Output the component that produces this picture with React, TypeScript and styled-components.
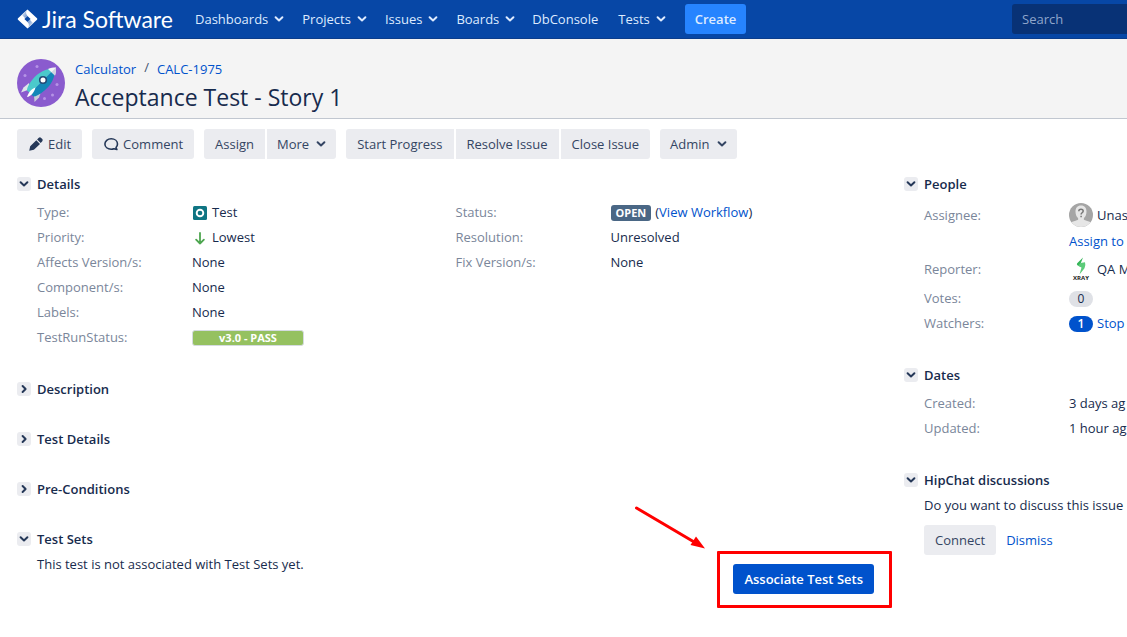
import React from "react";
import styled, { createGlobalStyle, css } from "styled-components";

const GlobalStyle = createGlobalStyle`
  * { box-sizing: border-box; }
  body {
    margin: 0;
    background: #fff;
    color: #172b4d;
    font-family: "Open Sans", "Noto Sans", sans-serif;
    font-size: 13px;
    line-height: 20px;
    overflow-x: hidden;
  }
  button, input { font: inherit; }
  a { color: #0052cc; text-decoration: none; }
`;

const NavBar = styled.header`
  display: flex;
  align-items: center;
  height: 39px;
  padding-left: 17px;
  background: #0747a6;
  border-bottom: 1px solid #0b3d8c;
`;

const Logo = styled.a`
  display: flex;
  align-items: center;
  gap: 4px;
  width: 169px;
  color: #fff;
  font-family: Lato, sans-serif;
  font-size: 23px;
  white-space: nowrap;
`;

const Nav = styled.nav`
  display: flex;
  align-items: center;
`;

const NavButton = styled.button`
  display: flex;
  align-items: center;
  gap: 6px;
  height: 30px;
  padding: 0 9px;
  border: 0;
  background: none;
  color: #deebff;
`;

const NavLink = styled.a`
  padding: 0 11px 0 8px;
  color: #deebff;
`;

const CreateButton = styled.button`
  height: 30px;
  margin-left: 10px;
  padding: 0 10px;
  border: 0;
  border-radius: 3px;
  background: #2684ff;
  color: #deebff;
  font-weight: 600;
`;

const SearchInput = styled.input`
  width: 115px;
  height: 30px;
  margin-left: auto;
  padding: 0 10px;
  border: 0;
  border-radius: 3px 0 0 3px;
  background: #083276;
  color: #deebff;
  &::placeholder { color: #8fa6cb; opacity: 1; }
`;

const IssueHeader = styled.div`
  display: flex;
  gap: 10px;
  height: 80px;
  padding: 20px 17px 0;
  background: #f4f4f4;
  border-bottom: 1px solid #c1c7d0;
`;

const Crumbs = styled.nav`
  display: flex;
  gap: 8px;
`;

const Slash = styled.span`
  color: #42526e;
  line-height: 16px;
`;

const Title = styled.h1`
  margin: 0;
  font-size: 23px;
  font-weight: 500;
  line-height: 36px;
`;

const Toolbar = styled.div`
  display: flex;
  gap: 10px;
  padding: 10px 17px 0;
`;

const ButtonGroup = styled.div`
  display: flex;
  gap: 2px;
`;

const ToolButton = styled.button<{ $menu?: boolean }>`
  display: flex;
  align-items: center;
  gap: ${(p) => (p.$menu ? 7 : 4)}px;
  height: 30px;
  padding: 0 ${(p) => (p.$menu ? 10 : 11)}px;
  border: 0;
  background: #ebecf0;
  color: #344563;
  white-space: nowrap;
  &:first-child { border-top-left-radius: 3px; border-bottom-left-radius: 3px; }
  &:last-child { border-top-right-radius: 3px; border-bottom-right-radius: 3px; }
`;

const Columns = styled.div`
  display: grid;
  grid-template-columns: minmax(0, 1fr) 223px;
  gap: 30px;
  padding: 15px 0 20px 17px;
`;

const Stack = styled.div`
  display: flex;
  flex-direction: column;
  gap: 30px;
  min-width: 0;
`;

const ModuleHead = styled.div`
  display: flex;
  align-items: center;
  gap: 6px;
`;

const Toggle = styled.button`
  display: flex;
  align-items: center;
  justify-content: center;
  width: 14px;
  height: 14px;
  padding: 0;
  border: 0;
  border-radius: 3px;
  background: #ebecf0;
  color: #253858;
`;

const ModuleTitle = styled.h2`
  margin: 0;
  font-size: 13px;
  font-weight: 600;
  line-height: 20px;
  white-space: nowrap;
`;

const ModuleBody = styled.div`
  padding: 5px 0 0 20px;
`;

const DetailColumns = styled.div`
  display: grid;
  grid-template-columns: 1fr 1fr;
`;

const List = styled.dl`
  margin: 0;
`;

const Row = styled.div<{ $label: number; $tall?: boolean }>`
  display: grid;
  grid-template-columns: ${(p) => p.$label}px minmax(0, 1fr);
  height: ${(p) => (p.$tall ? 32 : 25)}px;
  line-height: ${(p) => (p.$tall ? 32 : 27)}px;
  white-space: nowrap;
`;

const Term = styled.dt`
  color: #7a869a;
`;

const Value = styled.dd<{ $tall?: boolean }>`
  display: flex;
  align-items: center;
  gap: 4px;
  height: ${(p) => (p.$tall ? 32 : 27)}px;
  margin: 0;
  > * { flex-shrink: 0; }
`;

const AssignLine = styled.div`
  padding: 0 0 2px 145px;
  line-height: 20px;
  white-space: nowrap;
`;

const Lozenge = styled.span`
  height: 16px;
  padding: 0 5px;
  border-radius: 3px;
  background: #4a6785;
  color: #fff;
  font-size: 11px;
  font-weight: 700;
  line-height: 16px;
`;

const RunStatus = styled.span`
  width: 112px;
  height: 16px;
  border: 1px solid #d5dbe0;
  border-radius: 3px;
  background: #95c160;
  color: #fff;
  font-size: 11px;
  font-weight: 700;
  line-height: 14px;
  text-align: center;
`;

const Badge = styled.span<{ $active?: boolean }>`
  width: 24px;
  height: 16px;
  border-radius: 8px;
  background: #dfe1e6;
  color: #172b4d;
  font-size: 12px;
  line-height: 16px;
  text-align: center;
  ${(p) =>
    p.$active &&
    css`
      background: #0052cc;
      color: #fff;
      font-weight: 600;
    `}
`;

const TestSetsRow = styled.div`
  display: flex;
  justify-content: space-between;
  align-items: flex-start;
`;

const Text = styled.p`
  margin: 0;
  white-space: nowrap;
`;

const Callout = styled.div`
  position: relative;
  margin-top: 10px;
  &::after {
    content: "";
    position: absolute;
    inset: -13px -18px -14px -16px;
    border: 3px solid #f00;
    border-radius: 1px;
    pointer-events: none;
  }
`;

const CalloutArrow = styled.svg`
  position: absolute;
  left: -100px;
  top: -60px;
  pointer-events: none;
`;

const PrimaryButton = styled.button`
  height: 30px;
  padding: 0 11px;
  border: 0;
  border-radius: 3px;
  background: #0052cc;
  color: #fff;
  font-weight: 600;
`;

const Actions = styled.div`
  display: flex;
  align-items: center;
  gap: 10px;
  padding-top: 10px;
`;

const ChevronDown = () => (
  <svg width="10" height="8" viewBox="0 0 10 8" fill="none" stroke="currentColor" strokeWidth="2" strokeLinecap="round" strokeLinejoin="round" aria-hidden="true">
    <path d="M1.6 2.3 5 5.5 8.4 2.3" />
  </svg>
);

const ChevronRight = () => (
  <svg width="8" height="10" viewBox="0 0 8 10" fill="none" stroke="currentColor" strokeWidth="2" strokeLinecap="round" strokeLinejoin="round" aria-hidden="true">
    <path d="M2.6 2 5.6 5 2.6 8" />
  </svg>
);

const JiraMark = () => (
  <svg width="21" height="20" viewBox="0 0 21 20" aria-hidden="true">
    <defs>
      <linearGradient id="fadeUp" x1="0" y1="0" x2="1" y2="1">
        <stop offset="0" stopColor="#fff" />
        <stop offset="1" stopColor="#5b86c6" />
      </linearGradient>
      <linearGradient id="fadeDown" x1="1" y1="1" x2="0" y2="0">
        <stop offset="0" stopColor="#fff" />
        <stop offset="1" stopColor="#5b86c6" />
      </linearGradient>
    </defs>
    <path fill="#fff" fillRule="evenodd" d="M10.5.4 20 9.3q.7.7 0 1.4L10.5 19.6 1 10.7q-.7-.7 0-1.4ZM10.5 6.9 7.4 10l3.1 3.1 3.1-3.1Z" />
    <path fill="url(#fadeUp)" d="M10.5 6.9C8.6 5 8.6 2.4 10.4.5L4.800 5.700 8.200 9.200Z" />
    <path fill="url(#fadeDown)" d="M10.5 13.1c1.9 1.9 1.9 4.5.1 6.4l5.600-5.200-3.400-3.500Z" />
  </svg>
);

const RocketAvatar = () => (
  <svg width="48" height="48" viewBox="0 0 48 48" role="img" aria-label="Calculator">
    <circle cx="24" cy="24" r="24" fill="#8a5bce" />
    <g fill="#b593e6">
      <circle cx="20" cy="7.5" r="1.5" />
      <circle cx="8" cy="16.5" r="1.5" />
      <circle cx="40" cy="25.5" r="1.5" />
      <circle cx="35.5" cy="36" r="1.5" />
      <circle cx="27.5" cy="39.5" r="1.5" />
    </g>
    <path fill="#dfe3ea" d="M12 24 6.5 28.5 4 33.5l8-3Z" />
    <path fill="#c9ced9" d="M23.5 34.5 22 38.5 17.5 43 17 36Z" />
    <path fill="#4bc9cb" d="M38.5 9C29 9.5 21 13.5 15.5 20.5 11.500 25.500 10 29 10 31.500L13.500 34.500Z" />
    <path fill="#1487b8" d="M38.500 9C38 18.500 34.500 26 27.500 31.500 22.500 35.500 19 37.500 16.500 37.500L13 34.500Z" />
    <path fill="#f4f5f7" d="M39 8.500c-3 0-5.500.4-8 1.500l7 6.500c.8-2.500 1.100-5 1-8Z" />
    <path fill="#cfd5df" d="m39 8.500-4.500 4.700 3.500 3.300c.8-2.500 1.100-5 1-8Z" />
    <path fill="#fff" d="M18.500 28.500c-3.500 1-6.500 4-8.500 9.500 3.500-.5 7-4 8.500-9.500Z" />
    <circle cx="26" cy="21" r="3.300" fill="#fff" stroke="#234a75" strokeWidth="1.600" />
  </svg>
);

const PencilIcon = () => (
  <svg width="16" height="16" viewBox="0 0 16 16" fill="#253858" aria-hidden="true">
    <path d="M1.200 14.800 2.200 10.200 8.300 4.200 12 7.900 5.900 13.800ZM9.100 3.400 10.800 1.800Q12 .9 13.100 1.900L14.300 3.100Q15.200 4.200 14.300 5.300L12.700 7Z" />
  </svg>
);

const BubbleIcon = () => (
  <svg width="16" height="16" viewBox="0 0 16 16" fill="none" stroke="#253858" strokeWidth="1.600" strokeLinejoin="round" aria-hidden="true">
    <path d="M8.200 2.800C4.600 2.800 1.900 5 1.900 8s2.700 5.200 6.300 5.200c1 0 1.900-.2 2.700-.5l3 .8-.9-2c.9-.9 1.500-2.100 1.500-3.500 0-3-2.700-5.200-6.300-5.200Z" />
  </svg>
);

const TestIcon = () => (
  <svg width="16" height="16" viewBox="-1 -1 16 16" aria-hidden="true">
    <rect width="14" height="14" rx="1.500" fill="#0f7583" />
    <circle cx="7" cy="7" r="3.300" fill="none" stroke="#fff" strokeWidth="1.900" />
  </svg>
);

const LowestIcon = () => (
  <svg width="16" height="16" viewBox="0 0 16 16" fill="none" stroke="#4ea650" strokeWidth="1.800" strokeLinecap="round" strokeLinejoin="round" aria-hidden="true">
    <path d="M8 3v10.500M4.100 9.600 8 13.500l3.900-3.900" />
  </svg>
);

const UnassignedAvatar = () => (
  <svg width="24" height="24" viewBox="0 0 24 24" aria-hidden="true">
    <defs>
      <clipPath id="avatarCircle"><circle cx="12" cy="12" r="12" /></clipPath>
    </defs>
    <g clipPath="url(#avatarCircle)">
      <rect width="24" height="24" fill="#a5a5a5" />
      <path fill="#e6e6e6" d="M12 2.500c-3.700 0-5.500 2.600-5.500 6 0 3 1 5.200 2.600 6.600v1.600C5.500 18 2.500 18.600 0 20.500V24h24v-3.500c-2.500-1.900-5.500-2.500-9.100-3.800v-1.600c1.600-1.400 2.600-3.600 2.600-6.600 0-3.400-1.800-6-5.500-6Z" />
      <path fill="none" stroke="#777" strokeWidth="1.500" d="M9.800 8.200c0-1.400.9-2 2.200-2s2.200.7 2.200 1.900c0 1.700-2.100 1.600-2.100 3.400M12.100 12.700v1.600" />
    </g>
  </svg>
);

const XrayMark = styled.span`
  display: flex;
  flex-direction: column;
  align-items: center;
  width: 24px;
  height: 24px;
  color: #222;
  font-size: 6px;
  font-weight: 700;
  line-height: 6px;
`;

const XrayAvatar = () => (
  <XrayMark>
    <svg width="12" height="18" viewBox="0 0 12 18" aria-hidden="true">
      <path fill="#35b558" d="M8 .500 2.200 6.200Q1.400 7.300 2.400 8.200L6 10 5.500 6.800Z" />
      <path fill="#5ccb79" d="M5.500 6 10 5.300Q11 8.500 9.500 11.200L4.500 17.500 6.500 10.500 3 8.700Z" />
    </svg>
    XRAY
  </XrayMark>
);

function Module({ title, open = true, children }: { title: string; open?: boolean; children?: React.ReactNode }) {
  return (
    <section>
      <ModuleHead>
        <Toggle aria-label={title} aria-expanded={open}>{open ? <ChevronDown /> : <ChevronRight />}</Toggle>
        <ModuleTitle>{title}</ModuleTitle>
      </ModuleHead>
      {children && <ModuleBody>{children}</ModuleBody>}
    </section>
  );
}

function Field({ label, width = 155, tall, children }: { label: string; width?: number; tall?: boolean; children: React.ReactNode }) {
  return (
    <Row $label={width} $tall={tall}>
      <Term>{label}</Term>
      <Value $tall={tall}>{children}</Value>
    </Row>
  );
}

function NavMenu({ children }: { children: string }) {
  return <NavButton>{children}<ChevronDown /></NavButton>;
}

export default function App() {
  return (
    <>
      <GlobalStyle />
      <NavBar>
        <Logo href="#"><JiraMark />Jira Software</Logo>
        <Nav>
          <NavMenu>Dashboards</NavMenu>
          <NavMenu>Projects</NavMenu>
          <NavMenu>Issues</NavMenu>
          <NavMenu>Boards</NavMenu>
          <NavLink href="#">DbConsole</NavLink>
          <NavMenu>Tests</NavMenu>
          <CreateButton>Create</CreateButton>
        </Nav>
        <SearchInput type="text" placeholder="Search" aria-label="Search" />
      </NavBar>

      <IssueHeader>
        <RocketAvatar />
        <div>
          <Crumbs>
            <a href="#">Calculator</a>
            <Slash>/</Slash>
            <a href="#">CALC-1975</a>
          </Crumbs>
          <Title>Acceptance Test - Story 1</Title>
        </div>
      </IssueHeader>

      <Toolbar>
        <ButtonGroup><ToolButton><PencilIcon />Edit</ToolButton></ButtonGroup>
        <ButtonGroup><ToolButton><BubbleIcon />Comment</ToolButton></ButtonGroup>
        <ButtonGroup>
          <ToolButton>Assign</ToolButton>
          <ToolButton $menu>More <ChevronDown /></ToolButton>
        </ButtonGroup>
        <ButtonGroup>
          <ToolButton>Start Progress</ToolButton>
          <ToolButton>Resolve Issue</ToolButton>
          <ToolButton>Close Issue</ToolButton>
        </ButtonGroup>
        <ButtonGroup><ToolButton $menu>Admin <ChevronDown /></ToolButton></ButtonGroup>
      </Toolbar>

      <Columns>
        <Stack as="main">
          <Module title="Details">
            <DetailColumns>
              <List>
                <Field label="Type:"><TestIcon />Test</Field>
                <Field label="Priority:"><LowestIcon />Lowest</Field>
                <Field label="Affects Version/s:">None</Field>
                <Field label="Component/s:">None</Field>
                <Field label="Labels:">None</Field>
                <Field label="TestRunStatus:"><RunStatus>v3.0 - PASS</RunStatus></Field>
              </List>
              <List>
                <Field label="Status:">
                  <Lozenge>OPEN</Lozenge>
                  <span>(<a href="#">View Workflow</a>)</span>
                </Field>
                <Field label="Resolution:">Unresolved</Field>
                <Field label="Fix Version/s:">None</Field>
              </List>
            </DetailColumns>
          </Module>
          <Module title="Description" open={false} />
          <Module title="Test Details" open={false} />
          <Module title="Pre-Conditions" open={false} />
          <Module title="Test Sets">
            <TestSetsRow>
              <Text>This test is not associated with Test Sets yet.</Text>
              <Callout>
                <PrimaryButton>Associate Test Sets</PrimaryButton>
                <CalloutArrow width="74" height="46" viewBox="0 0 74 46" aria-hidden="true">
                  <path d="M3.500 4 62 38.500" stroke="#f00" strokeWidth="3" strokeLinecap="round" />
                  <path d="M72 44.500 57.500 41 63 32.500Z" fill="#f00" />
                </CalloutArrow>
              </Callout>
            </TestSetsRow>
          </Module>
        </Stack>

        <Stack as="aside">
          <Module title="People">
            <List>
              <Field label="Assignee:" width={145} tall><UnassignedAvatar />Unas</Field>
              <AssignLine><a href="#">Assign to</a></AssignLine>
              <Field label="Reporter:" width={145} tall><XrayAvatar />QA M</Field>
              <Field label="Votes:" width={145}><Badge>0</Badge></Field>
              <Field label="Watchers:" width={145}><Badge $active>1</Badge><a href="#">Stop</a></Field>
            </List>
          </Module>
          <Module title="Dates">
            <List>
              <Field label="Created:" width={145}>3 days ag</Field>
              <Field label="Updated:" width={145}>1 hour ag</Field>
            </List>
          </Module>
          <Module title="HipChat discussions">
            <Text>Do you want to discuss this issue</Text>
            <Actions>
              <ButtonGroup><ToolButton>Connect</ToolButton></ButtonGroup>
              <a href="#">Dismiss</a>
            </Actions>
          </Module>
        </Stack>
      </Columns>
    </>
  );
}
